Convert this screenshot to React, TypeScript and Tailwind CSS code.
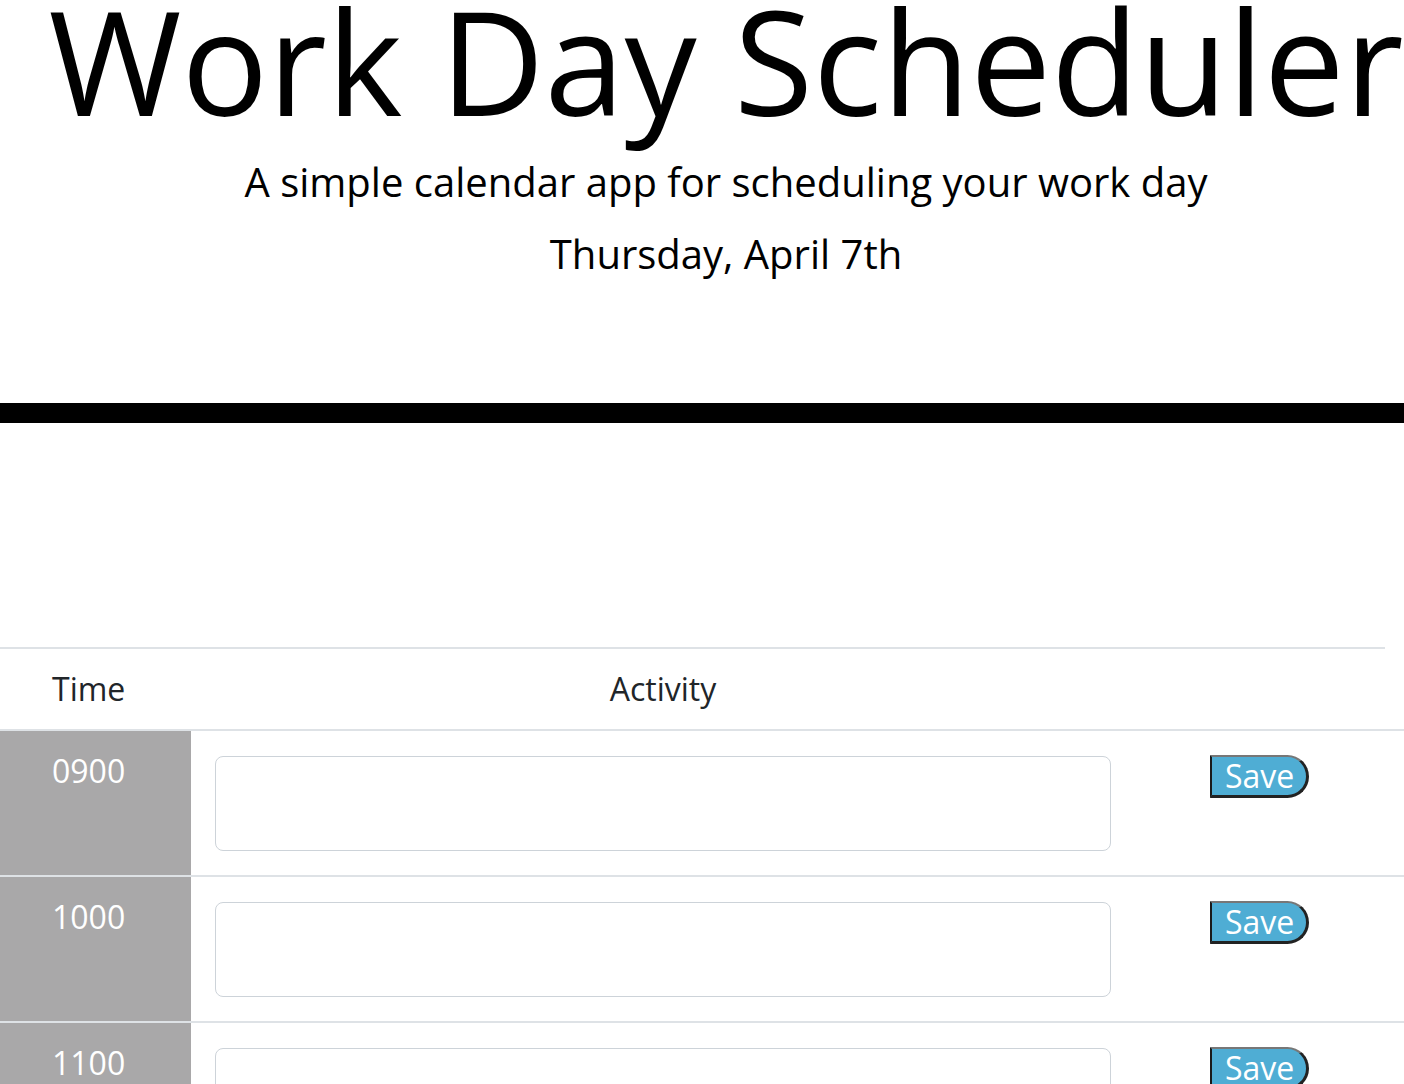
import React, { useState } from "react";

const hours = ["0900", "1000", "1100", "1200", "1300", "1400", "1500", "1600", "1700"];

const HourRow: React.FC<{ hour: string }> = ({ hour }) => {
  const [text, setText] = useState<string>("");
  return (
    <div className="flex border-t-2 border-[#dee2e6] h-[146px]">
      <div className="w-[191px] shrink-0 bg-[#a9a8a9] text-white pl-[52px] pt-[16px] leading-[48px]">
        {hour}
      </div>
      <div className="w-[944px] shrink-0 px-6 pt-[25px]">
        <textarea
          value={text}
          onChange={(e) => setText(e.target.value)}
          className="block w-full h-[95px] border border-[#cdd3d9] rounded-lg bg-white resize-none outline-none px-3"
        />
      </div>
      <div className="flex-1 pl-[75px] pt-[24px]">
        <button
          type="button"
          className="block h-[43px] w-[99px] bg-[#4fadd4] text-white leading-[36px] text-left pl-[13px] border-l-2 border-t-2 border-r-[3px] border-b-[3px] border-l-[#1a1a1a] border-t-[#777777] border-r-[#222222] border-b-[#222222] rounded-r-[22px]"
        >
          Save
        </button>
      </div>
    </div>
  );
};

export default function App() {
  return (
    <div className="min-h-screen bg-white overflow-hidden font-['Open_Sans',sans-serif] text-[#212529] text-[32px]">
      <header className="pl-[48px] text-center text-black">
        <h1 className="text-[144px] leading-[120px] whitespace-nowrap">
          Work Day Scheduler
        </h1>
        <p className="mt-[26px] text-[40px] leading-[72px]">
          A simple calendar app for scheduling your work day
        </p>
        <p className="text-[40px] leading-[72px]">Thursday, April 7th</p>
      </header>
      <div className="mt-[113px] h-5 bg-black" />

      <div className="mt-[224px]">
        <div className="w-[1385px] border-t-2 border-[#dee2e6]" />
        <div className="flex h-[80px] leading-[48px] pt-4">
          <div className="w-[191px] pl-[52px]">Time</div>
          <div className="w-[944px] text-center">Activity</div>
          <div className="flex-1" />
        </div>
        {hours.map((h) => (
          <HourRow key={h} hour={h} />
        ))}
      </div>
    </div>
  );
}
